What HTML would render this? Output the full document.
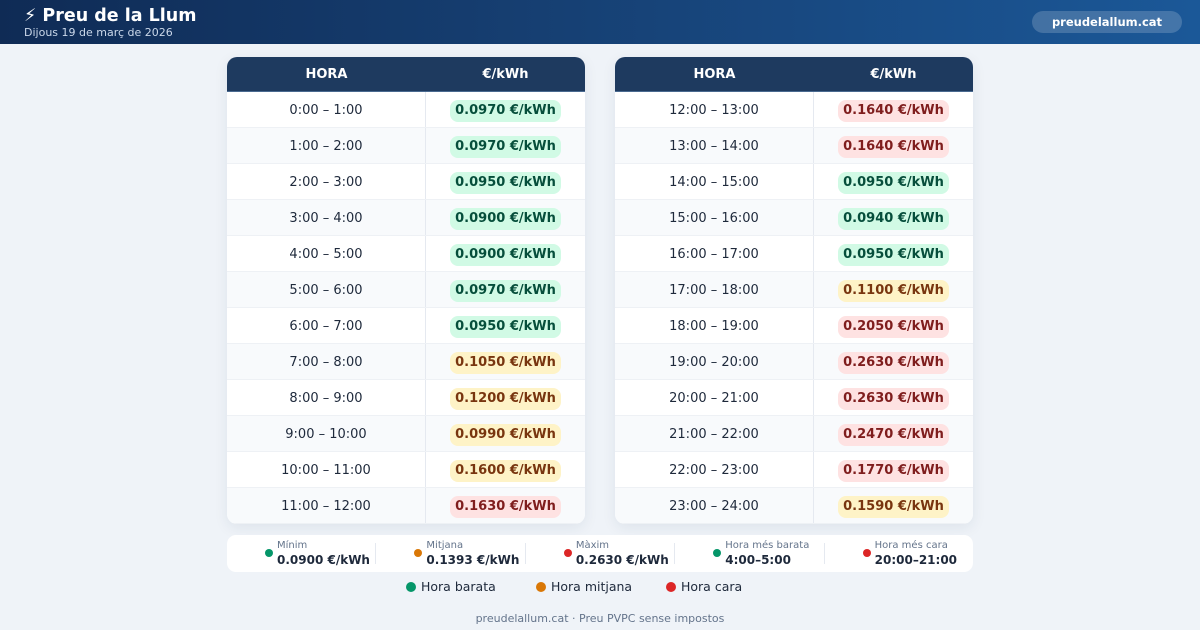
<!DOCTYPE html>
<html><head><meta charset="utf-8"><style>
*{margin:0;padding:0;box-sizing:border-box}
body{width:1200px;height:630px;background:#eff3f8;font-family:"DejaVu Sans","Liberation Sans",sans-serif;position:relative;overflow:hidden;color:#1e293b}
.hdr{position:absolute;left:0;top:0;width:1200px;height:44px;background:linear-gradient(90deg,#0f2b55 0%,#163f72 45%,#1b5898 100%)}
.hdr h1{position:absolute;left:24px;top:6px;color:#fff;font-size:17.5px;font-weight:bold;line-height:21px}
.hdr .d{position:absolute;left:24px;top:26px;color:#cbd8ea;font-size:11px;line-height:13px}
.pill{position:absolute;left:1032px;top:11px;width:150px;height:22px;border-radius:11px;background:rgba(255,255,255,.18);color:#fff;font-size:11.5px;font-weight:bold;text-align:center;line-height:22px}
.tbl{position:absolute;top:57px;width:358px;height:467px;background:#fff;border-radius:10px;overflow:hidden;box-shadow:0 4px 14px rgba(30,50,90,.08)}
.th{height:35px;background:#1e3a5f;color:#fff;font-weight:bold;font-size:13px;display:flex;border-bottom:1px solid #4a6a90}
.th div{line-height:36px;text-align:center}
.c1{width:199px;border-right:1px solid #e5e9f0}
.c2{flex:1}
.r{height:36px;display:flex;border-bottom:1px solid #eef1f5;font-size:13px}
.r:nth-child(even){background:#f8fafc}
.r .c1{line-height:36px;padding-top:1px;text-align:center;color:#1e293b}
.r .c2{display:flex;align-items:center;justify-content:center;padding-top:3px}
.b{display:inline-block;height:22px;line-height:22px;padding:0 5px;border-radius:8px;font-weight:bold;font-size:13px}
.g{background:#d1fae5;color:#064e3b}.y{background:#fef3c7;color:#78350f}.rd{background:#fee2e2;color:#7f1d1d}
.sum{position:absolute;left:227px;top:535px;width:746px;height:37px;background:#fff;border-radius:9px;display:flex}
.si{flex:1;position:relative;border-right:1px solid #e5e9f0;margin:8px 0}
.si:last-child{border-right:none}
.si .dot{position:absolute;left:38px;top:6px;width:8px;height:8px;border-radius:50%}
.si .l{position:absolute;left:50px;top:-3px;font-size:10px;color:#64748b}
.si .v{position:absolute;left:50px;top:10px;font-size:12px;font-weight:bold;color:#1e293b;white-space:nowrap}
.leg{position:absolute;top:579px;font-size:12.5px;color:#1e293b;line-height:16px}
.leg i{display:inline-block;width:10px;height:10px;border-radius:50%;margin-right:5px;vertical-align:-1px}
.ft{position:absolute;top:612px;left:0;width:1200px;text-align:center;font-size:11px;color:#64748b}
</style></head><body>
<div class="hdr"><h1>⚡ Preu de la Llum</h1><div class="d">Dijous 19 de març de 2026</div><div class="pill">preudelallum.cat</div></div>

<div class="tbl" style="left:227px">
<div class="th"><div class="c1" style="border-right:none">HORA</div><div class="c2">€/kWh</div></div>
<div>
<div class="r"><div class="c1">0:00 – 1:00</div><div class="c2"><span class="b g">0.0970 €/kWh</span></div></div>
<div class="r"><div class="c1">1:00 – 2:00</div><div class="c2"><span class="b g">0.0970 €/kWh</span></div></div>
<div class="r"><div class="c1">2:00 – 3:00</div><div class="c2"><span class="b g">0.0950 €/kWh</span></div></div>
<div class="r"><div class="c1">3:00 – 4:00</div><div class="c2"><span class="b g">0.0900 €/kWh</span></div></div>
<div class="r"><div class="c1">4:00 – 5:00</div><div class="c2"><span class="b g">0.0900 €/kWh</span></div></div>
<div class="r"><div class="c1">5:00 – 6:00</div><div class="c2"><span class="b g">0.0970 €/kWh</span></div></div>
<div class="r"><div class="c1">6:00 – 7:00</div><div class="c2"><span class="b g">0.0950 €/kWh</span></div></div>
<div class="r"><div class="c1">7:00 – 8:00</div><div class="c2"><span class="b y">0.1050 €/kWh</span></div></div>
<div class="r"><div class="c1">8:00 – 9:00</div><div class="c2"><span class="b y">0.1200 €/kWh</span></div></div>
<div class="r"><div class="c1">9:00 – 10:00</div><div class="c2"><span class="b y">0.0990 €/kWh</span></div></div>
<div class="r"><div class="c1">10:00 – 11:00</div><div class="c2"><span class="b y">0.1600 €/kWh</span></div></div>
<div class="r"><div class="c1">11:00 – 12:00</div><div class="c2"><span class="b rd">0.1630 €/kWh</span></div></div>
</div></div>

<div class="tbl" style="left:615px">
<div class="th"><div class="c1" style="border-right:none">HORA</div><div class="c2">€/kWh</div></div>
<div>
<div class="r"><div class="c1">12:00 – 13:00</div><div class="c2"><span class="b rd">0.1640 €/kWh</span></div></div>
<div class="r"><div class="c1">13:00 – 14:00</div><div class="c2"><span class="b rd">0.1640 €/kWh</span></div></div>
<div class="r"><div class="c1">14:00 – 15:00</div><div class="c2"><span class="b g">0.0950 €/kWh</span></div></div>
<div class="r"><div class="c1">15:00 – 16:00</div><div class="c2"><span class="b g">0.0940 €/kWh</span></div></div>
<div class="r"><div class="c1">16:00 – 17:00</div><div class="c2"><span class="b g">0.0950 €/kWh</span></div></div>
<div class="r"><div class="c1">17:00 – 18:00</div><div class="c2"><span class="b y">0.1100 €/kWh</span></div></div>
<div class="r"><div class="c1">18:00 – 19:00</div><div class="c2"><span class="b rd">0.2050 €/kWh</span></div></div>
<div class="r"><div class="c1">19:00 – 20:00</div><div class="c2"><span class="b rd">0.2630 €/kWh</span></div></div>
<div class="r"><div class="c1">20:00 – 21:00</div><div class="c2"><span class="b rd">0.2630 €/kWh</span></div></div>
<div class="r"><div class="c1">21:00 – 22:00</div><div class="c2"><span class="b rd">0.2470 €/kWh</span></div></div>
<div class="r"><div class="c1">22:00 – 23:00</div><div class="c2"><span class="b rd">0.1770 €/kWh</span></div></div>
<div class="r"><div class="c1">23:00 – 24:00</div><div class="c2"><span class="b y">0.1590 €/kWh</span></div></div>
</div></div>

<div class="sum">
<div class="si"><span class="dot" style="background:#059669"></span><span class="l">Mínim</span><span class="v">0.0900 €/kWh</span></div>
<div class="si"><span class="dot" style="background:#d97706"></span><span class="l">Mitjana</span><span class="v">0.1393 €/kWh</span></div>
<div class="si"><span class="dot" style="background:#dc2626"></span><span class="l">Màxim</span><span class="v">0.2630 €/kWh</span></div>
<div class="si"><span class="dot" style="background:#059669"></span><span class="l">Hora més barata</span><span class="v">4:00–5:00</span></div>
<div class="si"><span class="dot" style="background:#dc2626"></span><span class="l">Hora més cara</span><span class="v">20:00–21:00</span></div>
</div>

<div class="leg" style="left:406px"><i style="background:#059669"></i>Hora barata</div>
<div class="leg" style="left:536px"><i style="background:#d97706"></i>Hora mitjana</div>
<div class="leg" style="left:666px"><i style="background:#dc2626"></i>Hora cara</div>

<div class="ft">preudelallum.cat · Preu PVPC sense impostos</div>
</body></html>
